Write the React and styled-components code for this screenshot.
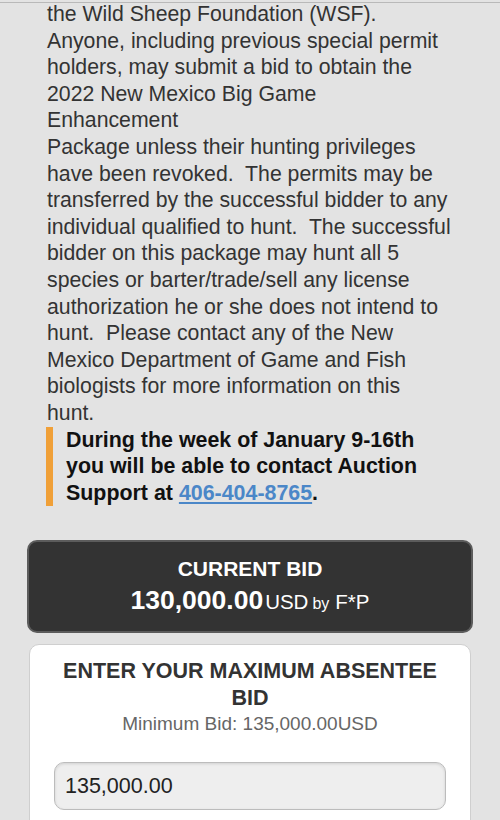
import React from "react";
import styled, { createGlobalStyle } from "styled-components";

const GlobalStyle = createGlobalStyle`
  html, body {
    margin: 0;
    padding: 0;
    background: #e3e3e3;
  }
  body {
    font-family: "Liberation Sans", Arial, Helvetica, sans-serif;
    color: #333;
  }
`;

const description =
  "the Wild Sheep Foundation (WSF). Anyone, including previous special permit holders, may submit a bid to obtain the 2022 New Mexico Big Game Enhancement\nPackage unless their hunting privileges have been revoked.  The permits may be transferred by the successful bidder to any individual qualified to hunt.  The successful bidder on this package may hunt all 5 species or barter/trade/sell any license authorization he or she does not intend to hunt.  Please contact any of the New Mexico Department of Game and Fish biologists for more information on this hunt.";

const App = () => {
  return (
    <>
      <GlobalStyle />
      <Page>
        <HeaderEdge />
        <Description>{description}</Description>
        <Notice>
          During the week of January 9-16th you will be able to contact
          Auction Support at <PhoneLink href="#">406-404-8765</PhoneLink>.
        </Notice>

        <BidPanel>
          <BidLabel>CURRENT BID</BidLabel>
          <BidLine>
            <Amount>130,000.00</Amount>
            <Currency>USD</Currency>
            <By>by</By>
            <Bidder>F*P</Bidder>
          </BidLine>
        </BidPanel>

        <MaxCard>
          <CardTitle>ENTER YOUR MAXIMUM ABSENTEE BID</CardTitle>
          <MinBid>Minimum Bid: 135,000.00USD</MinBid>
          <BidInput type="text" defaultValue="135,000.00" />
          <SubmitButton>PLACE BID</SubmitButton>
        </MaxCard>
      </Page>
    </>
  );
};

const Page = styled.div`
  position: relative;
  display: flex;
  flex-direction: column;
  padding-top: 1px;
  height: 820px;
  box-sizing: border-box;
  overflow: hidden;
`;

const HeaderEdge = styled.div`
  position: absolute;
  top: 2px;
  left: 0;
  right: 0;
  height: 1px;
  background: #b9b9b9;
`;

const Description = styled.p`
  margin: 0;
  width: 405px;
  padding-left: 47px;
  font-size: 21.25px;
  line-height: 26.6px;
  color: #333;
  white-space: pre-wrap;
`;

const Notice = styled.p`
  margin: 0 54px 0 46px;
  padding-left: 13px;
  border-left: 7px solid #f0a038;
  font-size: 21.4px;
  font-weight: bold;
  line-height: 26.6px;
  color: #111;
`;

const PhoneLink = styled.a`
  color: #4b87c8;
  text-decoration: underline;
`;

const BidPanel = styled.div`
  flex-shrink: 0;
  margin: 34px 27px 0;
  padding: 13px 10px 10px;
  background: #333;
  border: 2px solid #5c5c5c;
  border-radius: 10px;
  color: #fff;
  text-align: center;
`;

const BidLabel = styled.div`
  font-size: 21px;
  font-weight: bold;
  line-height: 28px;
`;

const BidLine = styled.div`
  line-height: 34px;
`;

const Amount = styled.span`
  font-size: 26.5px;
  font-weight: bold;
`;

const Currency = styled.span`
  font-size: 20.5px;
  margin-left: 2px;
`;

const By = styled.span`
  font-size: 16px;
  margin: 0 6px 0 4px;
`;

const Bidder = styled.span`
  font-size: 20.5px;
`;

const MaxCard = styled.div`
  flex-shrink: 0;
  margin: 11px 29px 0;
  padding: 13px 24px 20px;
  background: #fff;
  border: 1px solid #cfcfcf;
  border-radius: 10px;
  display: flex;
  flex-direction: column;
  align-items: stretch;
`;

const CardTitle = styled.div`
  margin: 0 2px;
  font-size: 21.5px;
  font-weight: bold;
  line-height: 27px;
  color: #333;
  text-align: center;
`;

const MinBid = styled.div`
  font-size: 19px;
  line-height: 24px;
  color: #666;
  text-align: center;
`;

const BidInput = styled.input`
  margin-top: 26px;
  height: 48px;
  box-sizing: border-box;
  padding: 0 10px;
  background: #eeeeee;
  border: 1px solid #bcbcbc;
  border-radius: 10px;
  box-shadow: inset 0 1px 3px rgba(0, 0, 0, 0.12);
  font-family: "Liberation Sans", Arial, sans-serif;
  font-size: 21.5px;
  color: #222;
  outline: none;
`;

const SubmitButton = styled.button`
  flex-shrink: 0;
  margin-top: 11px;
  height: 50px;
  background: #2c4a6b;
  border: 1px solid #1f3650;
  border-radius: 10px;
  color: #fff;
  font-family: "Liberation Sans", Arial, sans-serif;
  font-size: 21px;
  font-weight: bold;
`;

export default App;
